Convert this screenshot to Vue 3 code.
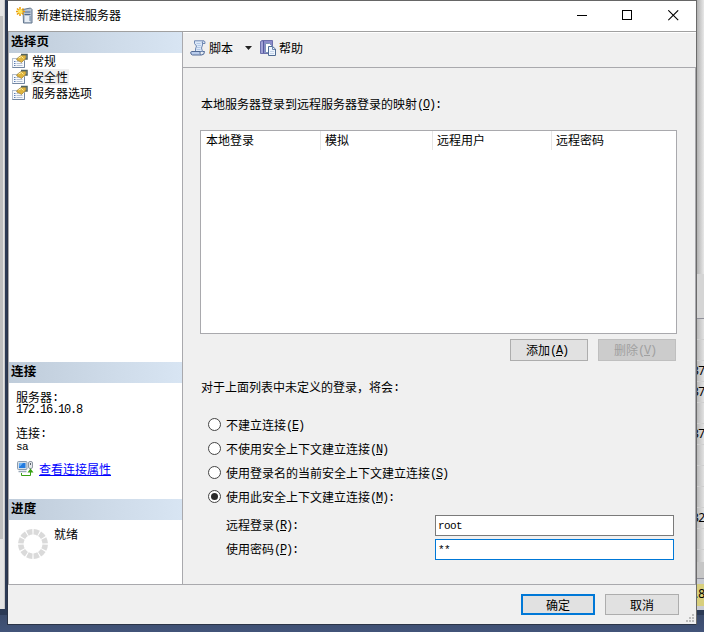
<script setup>
import { ref } from 'vue'

const pages = ['常规', '安全性', '服务器选项']
const columns = [
  { label: '本地登录', width: 120 },
  { label: '模拟', width: 112 },
  { label: '远程用户', width: 119 },
  { label: '远程密码', width: 124 },
]
const options = [
  { text: '不建立连接', key: 'E', tail: '' },
  { text: '不使用安全上下文建立连接', key: 'N', tail: '' },
  { text: '使用登录名的当前安全上下文建立连接', key: 'S', tail: '' },
  { text: '使用此安全上下文建立连接', key: 'M', tail: ':' },
]
const selected = ref(3)
const gridRows = ['', '', '37', '37', '', '37', '', '', '', '32', '', '']
const ticks = Array.from({ length: 12 }, (_, i) => i * 30)
</script>

<template>
  <div class="desktop">
    <div class="under-left"><div class="scroll-thumb"></div></div>
    <div class="under-right">
      <div class="pane-top"></div>
      <div class="pane-head"></div>
      <div v-for="(r, i) in gridRows" :key="i" class="grid-row">{{ r }}</div>
      <div class="pane-foot"></div>
      <div class="pane-status">.8</div>
    </div>

    <div class="dialog">
      <header class="titlebar">
        <svg class="app-icon" width="17" height="17" viewBox="0 0 17 17">
          <path d="M7 2.5 L14.5 1 L16 2.5 V16 H7.5 Z" fill="#b9c5d3" stroke="#61758d" />
          <path d="M8.5 5h6M8.5 7.5h6" stroke="#4d6a91" />
          <rect x="9" y="9" width="5" height="6" fill="#e7edf4" />
          <path d="M14 9v5" stroke="#6d87a6" />
          <path d="M4 0v9M0 4.5h9M1 1.5l6.5 6M7.5 1.5L1 7.5" stroke="#e99c08" stroke-width="1.5" />
          <circle cx="4.2" cy="4.5" r="2.3" fill="#ffe75b" />
        </svg>
        <span class="title">新建链接服务器</span>
        <div class="controls">
          <svg width="11" height="11" viewBox="0 0 11 11"><path d="M1 5.5h10" stroke="#000" /></svg>
          <svg width="11" height="11" viewBox="0 0 11 11"><rect x=".5" y=".5" width="9" height="9" fill="none" stroke="#000" /></svg>
          <svg width="11" height="11" viewBox="0 0 11 11"><path d="M.3 .3l9.9 9.9M10.2 .3L.3 10.2" stroke="#000" stroke-width="1.1" /></svg>
        </div>
      </header>

      <div class="body">
        <aside class="sidebar">
          <section class="pages">
            <h2>选择页</h2>
            <ul>
              <li v-for="(p, i) in pages" :key="p">
                <svg width="16" height="16" viewBox="0 0 16 16">
                  <rect x=".5" y="5.500" width="12" height="9" fill="#f8fafc" stroke="#b4bfce" />
                  <path d="M.5 14.500h12V8" fill="none" stroke="#7386a1" />
                  <path d="M2 8.500h1.500M2 10.500h1.500M2 12.500h1.500" stroke="#5a7db5" />
                  <path d="M4.500 8.500h2M4.500 10.500h6M4.500 12.500h6" stroke="#b7c2d3" />
                  <path d="M4.500 6L7.500 3.500L10 2H14V6L11.500 7.500L9.500 9.500L8 8.500L5.500 7.500Z" fill="#dfb43c" stroke="#8f7538" stroke-width=".7" />
                  <path d="M6.500 5l3-1.500 2 2" fill="none" stroke="#fff0a1" />
                  <path d="M9 1.500h6v4.500h-1.500" fill="none" stroke="#52635e" stroke-width="1.500" />
                </svg>
                <span :class="{ current: i === 1 }">{{ p }}</span>
              </li>
            </ul>
          </section>
          <section class="connection">
            <h2>连接</h2>
            <dl>
              <dt>服务器<i>:</i></dt>
              <dd><i>172.16.10.8</i></dd>
              <dt>连接<i>:</i></dt>
              <dd><i class="small">sa</i></dd>
            </dl>
            <div class="link-row">
              <svg width="17" height="16" viewBox="0 0 17 16">
                <rect x=".5" y="1.500" width="9.500" height="8" rx="1" fill="#d5dfe9" stroke="#8b9bad" />
                <rect x="2" y="3" width="6.500" height="5" fill="#237be0" />
                <path d="M2 3h4L2.500 7z" fill="#73b6f5" />
                <path d="M1.500 11.500h8" stroke="#9aa9b8" stroke-width="1.500" />
                <rect x="11.500" y="1.500" width="4" height="7" rx="1.500" fill="#e4e7eb" stroke="#8f98a3" />
                <path d="M13.500 3v2" stroke="#59636e" />
                <path d="M4.500 13v2.500h9V10" fill="none" stroke="#38a012" />
                <path d="M10.500 12.500l3-4 3 4z" fill="#38a012" />
              </svg>
              <a>查看连接属性</a>
            </div>
          </section>
          <section class="progress">
            <h2>进度</h2>
            <div class="status">
              <svg width="30" height="30" viewBox="-15 -15 30 30">
                <path v-for="t in ticks" :key="t" d="M-3.200 -14.600A15 15 0 0 1 3.200 -14.600L2 -9.200A9.500 9.500 0 0 0 -2 -9.200Z" fill="#dadada" :transform="`rotate(${t + 15})`" />
              </svg>
              <span>就绪</span>
            </div>
          </section>
        </aside>

        <main>
          <div class="toolbar">
            <svg width="16" height="16" viewBox="0 0 16 16">
              <path d="M4.500 .8H13.500Q15.500 1 15 3.500H12.500V5L11.500 8L12.500 11.500H5.500V9L6.500 6L4.500 3.500Z" fill="#dce8f8" stroke="#6d87b2" />
              <path d="M12.500 3.500Q11.500 2 13.500 1" fill="none" stroke="#5873a0" />
              <path d="M6.500 3.500h4M7.500 5.500h3.500M7 7.500h3.500M6.500 9.500h4" stroke="#b2c8e6" />
              <path d="M1.500 11.500H10Q9.500 14 11.500 15H2.500Q.3 14.500 .8 12Z" fill="#b9cceb" stroke="#526a95" />
              <path d="M11.500 15Q14.500 15 14.500 11.500H12.500" fill="#dce8f8" stroke="#526a95" />
            </svg>
            <span class="tool-text">脚本</span>
            <svg class="caret" width="7" height="4" viewBox="0 0 7 4"><path d="M0 0h7L3.500 4z" fill="#222" /></svg>
            <svg width="16" height="16" viewBox="0 0 16 16">
              <path d="M.5 1.500L2 .5H12.500V13.500H.5Z" fill="#8b8bc9" stroke="#6d70ac" />
              <path d="M3.500 1v12" stroke="#565b9e" />
              <path d="M2 2v11" stroke="#b5b8e2" />
              <path d="M5.500 3.500H9.500L11.500 5.500V12.500H5.500Z" fill="#fff" stroke="#7d95b9" />
              <path d="M8.500 6.500H12.500L15.500 9V15.500H8.500Z" fill="#edf4fd" stroke="#4f6b93" />
              <path d="M12.500 6.500V9.500H15" fill="none" stroke="#6d86ad" />
              <path d="M10 11.500h4M10 13.500h4" stroke="#c5d5ea" />
            </svg>
            <span class="tool-text">帮助</span>
          </div>

          <div class="content">
            <p class="map-label">本地服务器登录到远程服务器登录的映射<i>(<u>O</u>):</i></p>
            <div class="list">
              <div class="list-head">
                <span v-for="c in columns" :key="c.label" :style="{ width: c.width + 'px' }">{{ c.label }}</span>
              </div>
            </div>
            <div class="list-actions">
              <button>添加<i>(<u>A</u>)</i></button>
              <button disabled>删除<i>(<u>V</u>)</i></button>
            </div>
            <p class="else-label">对于上面列表中未定义的登录，将会<i>:</i></p>
            <div class="options">
              <div v-for="(o, i) in options" :key="o.key" class="option" @click="selected = i">
                <svg width="13" height="13" viewBox="0 0 13 13">
                  <circle cx="6.500" cy="6.500" r="6" fill="#fff" stroke="#444" />
                  <circle v-if="selected === i" cx="6.500" cy="6.500" r="3.500" fill="#2b2b2b" />
                </svg>
                <span>{{ o.text }}<i>(<u>{{ o.key }}</u>){{ o.tail }}</i></span>
              </div>
            </div>
            <div class="field">
              <label>远程登录<i>(<u>R</u>):</i></label>
              <div class="input"><i class="small">root</i></div>
            </div>
            <div class="field">
              <label>使用密码<i>(<u>P</u>):</i></label>
              <div class="input focused"><i class="small">**</i></div>
            </div>
          </div>
        </main>
      </div>

      <footer>
        <button class="primary">确定</button>
        <button>取消</button>
        <svg class="grip" width="8" height="8" viewBox="0 0 8 8">
          <path d="M6 0h2v2h-2zM3 3h2v2h-2zM6 3h2v2h-2zM0 6h2v2h-2zM3 6h2v2h-2zM6 6h2v2h-2z" fill="#bdbdbd" />
        </svg>
      </footer>
    </div>
  </div>
</template>

<style>
body {
  overflow: hidden;
}
</style>

<style scoped>
* {
  box-sizing: border-box;
  margin: 0;
  padding: 0;
}
.desktop {
  position: relative;
  width: 704px;
  height: 632px;
  overflow: hidden;
  display: flex;
  justify-content: space-between;
  background: linear-gradient(#2c3a55 0, #2c3a55 615px, #3b4b6b 615px, #42547a 632px);
  font: 12px/16px "Noto Sans CJK SC", sans-serif;
  color: #000;
}
i {
  font-family: "Liberation Mono", monospace;
  font-style: normal;
  font-size: 12px;
  line-height: 0;
  letter-spacing: -1.2px;
  vertical-align: 1px;
}
i.small {
  font-size: 11px;
  letter-spacing: -0.6px;
}
svg {
  display: block;
  flex: none;
}
.under-left {
  width: 5px;
  height: 609px;
  background: #e4e4e4;
  border-right: 1px solid #c8c8c8;
  padding-top: 16px;
}
.scroll-thumb {
  width: 3px;
  height: 523px;
  background: #bfbfbf;
}
.under-right {
  width: 12px;
  height: 610px;
  display: flex;
  flex-direction: column;
  background: #c9ccd2;
}
.pane-top {
  height: 274px;
  background: linear-gradient(90deg, #b0b0b0 40%, #e8e8e8);
}
.pane-head {
  height: 45px;
  background: #d5d5d5;
  border-bottom: 1px solid #8f8f99;
}
.grid-row {
  height: 21px;
  flex: none;
  background: linear-gradient(90deg, #b8b8b8 40%, #e2e2e2);
  border-bottom: 1px solid #cfcfcf;
  font: 12px/20px "Noto Sans", sans-serif;
  letter-spacing: -0.6px;
}
.pane-foot {
  height: 17px;
  margin-top: -9px;
  flex: none;
  background: #c6c6c6;
  border-bottom: 1px solid #8f8f99;
}
.pane-status {
  margin-top: 5px;
  height: 22px;
  flex: none;
  background: #d8cf7d;
  font: 12px/20px "Noto Sans", sans-serif;
  padding-left: 3px;
}
.dialog {
  position: absolute;
  left: 7px;
  top: 0;
  width: 690px;
  height: 625px;
  display: flex;
  flex-direction: column;
  border: 1px solid #2b3447;
  border-top-color: #666;
  border-right-color: #6b6b6b;
  background: #f0f0f0;
}
.titlebar {
  height: 30px;
  flex: none;
  display: flex;
  align-items: center;
  background: #fff;
  padding: 0 17px 2px 8px;
}
.title {
  margin-left: 4px;
}
.controls {
  display: flex;
  gap: 35px;
  margin-left: auto;
}
.body {
  height: 554px;
  flex: none;
  display: flex;
  border-top: 1px solid #a0a0a0;
  border-bottom: 1px solid #a9a9ad;
}
.sidebar {
  width: 175px;
  flex: none;
  display: flex;
  flex-direction: column;
  background: #fff;
  border-left: 1px solid #a9a9ad;
  border-right: 1px solid #a9a9ad;
}
h2 {
  height: 21px;
  padding-left: 2px;
  font-size: 12.5px;
  line-height: 17px;
  font-weight: 700;
  letter-spacing: 0.3px;
  background: linear-gradient(90deg, #bfccda, #d8e5f3);
}
.pages {
  height: 330px;
}
.connection {
  height: 137px;
}
ul {
  list-style: none;
}
li {
  display: flex;
  height: 16px;
  padding-left: 3px;
  gap: 3px;
}
li span {
  padding: 0 1px;
}
li span.current {
  background: #f0f0f0;
}
dl {
  padding: 8px 0 0 7px;
  line-height: 12px;
}
dt {
  height: 12px;
}
dd {
  height: 12px;
  margin-bottom: 12px;
}
dd i.small {
  vertical-align: 0;
}
.link-row {
  display: flex;
  padding-left: 8px;
  gap: 5px;
  margin-top: -3px;
}
.link-row a {
  color: #0000ff;
  text-decoration: underline;
  line-height: 17px;
}
.status {
  display: flex;
  padding: 9px 0 0 9px;
  gap: 6px;
}
.status span {
  margin-top: -3px;
}
main {
  flex: 1;
  display: flex;
  flex-direction: column;
}
.toolbar {
  height: 36px;
  flex: none;
  display: flex;
  align-items: center;
  padding: 0 0 4px 7px;
  border-top: 1px solid #fff;
  border-bottom: 1px solid #a9a9ad;
}
.tool-text {
  margin-left: 3px;
}
.caret {
  margin: 0 8px 0 12px;
}
.content {
  flex: 1;
  padding: 28px 18px 0 17px;
  border-right: 1px solid #a9a9ad;
}
.map-label {
  height: 34px;
  padding-left: 1px;
}
.list {
  width: 477px;
  height: 204px;
  background: #fff;
  border: 1px solid #a9a9ad;
}
.list-head {
  display: flex;
  height: 19px;
}
.list-head span {
  flex: none;
  padding-left: 4px;
  line-height: 18px;
  border-right: 1px solid #e5e5e5;
}
.list-head span:first-child {
  padding-left: 5px;
}
.list-head span:last-child {
  border-right: 0;
}
.list-actions {
  display: flex;
  justify-content: flex-end;
  gap: 10px;
  padding: 5px 1px 0 0;
}
button {
  width: 78px;
  height: 22px;
  font: inherit;
  line-height: 18px;
  color: #000;
  background: #e1e1e1;
  border: 1px solid #adadad;
}
.list-actions button {
  padding-right: 4px;
}
button:disabled {
  color: #a0a0a0;
  background: #cccccc;
  border-color: #bfbfbf;
}
.else-label {
  padding: 18px 0 0 1px;
  height: 52px;
}
.option {
  display: flex;
  align-items: flex-start;
  height: 24px;
  padding: 4px 0 0 8px;
}
.option svg {
  margin: 1px 5px 0 0;
}
.field {
  display: flex;
  height: 24px;
  padding: 6px 3px 0 26px;
  justify-content: space-between;
}
.input {
  width: 239px;
  height: 21px;
  flex: none;
  background: #fff;
  border: 1px solid #7a7a7a;
  padding-left: 2px;
  line-height: 17px;
}
.input.focused {
  border-color: #0078d7;
}
label {
  line-height: 20px;
}
footer {
  flex: 1;
  display: flex;
  gap: 10px;
  padding: 9px 1px 0 513px;
}
footer button {
  width: 74px;
  height: 21px;
  flex: none;
  line-height: 17px;
}
footer button.primary {
  border: 2px solid #0078d7;
}
.grip {
  margin: 20px 0 0 -3px;
}
</style>
